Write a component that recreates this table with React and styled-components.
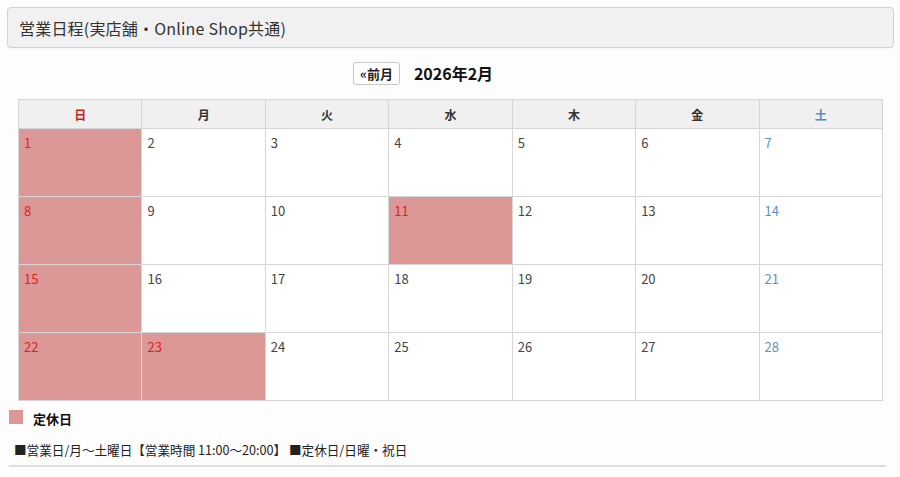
import React from "react";
import styled, { createGlobalStyle } from "styled-components";

const Global = createGlobalStyle`
  html, body { margin: 0; padding: 0; background: #fdfdfd; }
  body { font-family: "Noto Sans CJK JP", "Noto Sans", sans-serif; color: #333; }
`;

const Page = styled.div`
  padding: 7px 6px 0 7px;
`;

const TitleBox = styled.div`
  height: 41px;
  box-sizing: border-box;
  border: 1px solid #d2d2d2;
  border-radius: 4px;
  background: #f1f1f1;
  display: flex;
  align-items: center;
  padding-left: 11px;
  font-size: 16px;
  letter-spacing: 0.2px;
  color: #333;
  box-shadow: 0 1px 1px rgba(0,0,0,0.04);
`;

const Nav = styled.div`
  display: grid;
  grid-template-columns: 1fr auto 1fr;
  align-items: center;
  margin-top: 13px;
  height: 24px;
`;

const PrevButton = styled.button`
  justify-self: end;
  margin-right: 8px;
  height: 23px;
  padding: 0 6px;
  border: 1px solid #c8c8c8;
  border-radius: 3px;
  background: #fff;
  font-family: inherit;
  font-size: 13px;
  font-weight: 700;
  color: #222;
  line-height: 1;
`;

const MonthTitle = styled.div`
  font-size: 16px;
  font-weight: 700;
  color: #111;
  margin-left: 6px;
`;

const Table = styled.div`
  margin: 14px 11px 0 11px;
  display: grid;
  grid-template-columns: repeat(7, 1fr);
  border-top: 1px solid #d6d6d6;
  border-left: 1px solid #d6d6d6;
`;

const Head = styled.div`
  height: 28px;
  display: flex;
  align-items: center;
  justify-content: center;
  background: #f0f0f0;
  border-right: 1px solid #d6d6d6;
  border-bottom: 1px solid #d6d6d6;
  font-size: 12px;
  font-weight: 700;
  color: ${p => p.$tone === "sun" ? "#c81e1e" : p.$tone === "sat" ? "#4f8fc0" : "#333"};
`;

const Cell = styled.div`
  box-sizing: border-box;
  height: 68px;
  border-right: 1px solid #d6d6d6;
  border-bottom: 1px solid #d6d6d6;
  background: ${p => p.$closed ? "#dc9797" : "#fff"};
  padding: 4px 0 0 5px;
  font-size: 13px;
  color: ${p => p.$closed ? "#dd2222" : p.$sat ? "#5b93bd" : "#444"};
`;

const Legend = styled.div`
  display: flex;
  align-items: center;
  margin: 4px 0 0 2px;
  gap: 10px;
`;

const Swatch = styled.span`
  width: 14px;
  height: 14px;
  background: #dc9797;
`;

const LegendText = styled.span`
  font-size: 13px;
  font-weight: 700;
  color: #111;
  margin-top: 4px;
`;

const Note = styled.p`
  margin: 12px 0 0 7px;
  font-size: 12.6px;
  color: #222;
`;

const Rule = styled.hr`
  margin: 6px 8px 0 2px;
  border: 0;
  border-top: 2px solid #dedede;
`;

const days = [
  { l: "日", t: "sun" }, { l: "月" }, { l: "火" }, { l: "水" },
  { l: "木" }, { l: "金" }, { l: "土", t: "sat" },
];
const closed = new Set([1, 8, 11, 15, 22, 23]);

export default function App() {
  const cells = Array.from({ length: 28 }, (_, i) => i + 1);
  return (
    <Page>
      <Global />
      <TitleBox>営業日程(実店舗・Online Shop共通)</TitleBox>
      <Nav>
        <PrevButton>«前月</PrevButton>
        <MonthTitle>2026年2月</MonthTitle>
        <span />
      </Nav>
      <Table>
        {days.map(d => <Head key={d.l} $tone={d.t}>{d.l}</Head>)}
        {cells.map(n => (
          <Cell key={n} $closed={closed.has(n)} $sat={n % 7 === 0}>{n}</Cell>
        ))}
      </Table>
      <Legend>
        <Swatch />
        <LegendText>定休日</LegendText>
      </Legend>
      <Note>■営業日/月～土曜日【営業時間 11:00～20:00】 ■定休日/日曜・祝日</Note>
      <Rule />
    </Page>
  );
}
